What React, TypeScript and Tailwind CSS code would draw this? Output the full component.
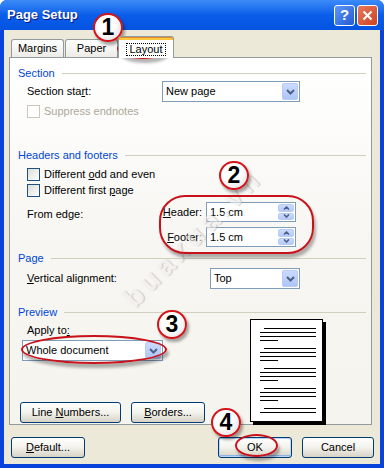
import React from 'react'

// XP-style Page Setup dialog (Layout tab) with tutorial markers

const Chevron = () => (
  <svg width="9" height="6" viewBox="0 0 9 6">
    <path d="M1 1l3.5 3.5L8 1" stroke="#4D6185" strokeWidth="2" fill="none" />
  </svg>
)

function Combo({ text, w }: { text: string; w: string }) {
  return (
    <div className={`flex h-[21px] items-center border border-[#7F9DB9] bg-white pl-[3px] pr-px ${w}`}>
      <span>{text}</span>
      <div className="ml-auto flex h-[17px] w-[16px] items-center justify-center rounded-[2px] border border-[#B8CBF5] bg-gradient-to-b from-[#CCDAFD] to-[#AFC5F8]">
        <Chevron />
      </div>
    </div>
  )
}

function Spin({ text }: { text: string }) {
  return (
    <div className="flex h-[20px] w-[90px] items-center border border-[#7F9DB9] bg-white pl-[3px] pr-px">
      <span>{text}</span>
      <div className="ml-auto flex h-[16px] w-[16px] flex-col gap-px">
        <div className="flex flex-1 items-center justify-center rounded-[2px] border border-[#B8CBF5] bg-gradient-to-b from-[#CCDAFD] to-[#B5C9F8]">
          <svg width="7" height="4" viewBox="0 0 7 4"><path d="M1 3.5l2.5-2.5L6 3.5" stroke="#4D6185" strokeWidth="1.6" fill="none" /></svg>
        </div>
        <div className="flex flex-1 items-center justify-center rounded-[2px] border border-[#B8CBF5] bg-gradient-to-b from-[#CCDAFD] to-[#B5C9F8]">
          <svg width="7" height="4" viewBox="0 0 7 4"><path d="M1 0.5l2.5 2.5L6 0.5" stroke="#4D6185" strokeWidth="1.6" fill="none" /></svg>
        </div>
      </div>
    </div>
  )
}

function Check({ label, disabled }: { label: React.ReactNode; disabled?: boolean }) {
  return (
    <div className="flex items-center gap-[4px]">
      <div
        className={
          disabled
            ? 'h-[13px] w-[13px] border border-[#CAC8BB] bg-white'
            : 'h-[13px] w-[13px] border border-[#1C5180] bg-gradient-to-br from-[#DCDCD7] to-white'
        }
      />
      <span className={disabled ? 'text-[#ACA899]' : ''}>{label}</span>
    </div>
  )
}

function Group({ title }: { title: string }) {
  return (
    <div className="flex h-[12px] items-center">
      <span className="text-[#0046D5]">{title}</span>
      <div className="ml-[7px] h-px flex-1 bg-[#D0D0BF]" />
    </div>
  )
}

function Btn({ children, w, def }: { children: React.ReactNode; w: string; def?: boolean }) {
  return (
    <div
      className={`flex h-[21px] items-center justify-center rounded-[3px] border border-[#003C74] bg-gradient-to-b from-white via-[#F3F2EC] to-[#D8D2C6] ${w} ${
        def ? 'shadow-[inset_0_0_0_1px_#BCD4F6,inset_0_-1px_0_1px_#8DB2E3]' : ''
      }`}
    >
      <span>{children}</span>
    </div>
  )
}

function Marker({ n, cls }: { n: string; cls: string }) {
  return (
    <div
      className={`absolute flex h-[29px] w-[30px] items-center justify-center rounded-full border-2 border-[#D4141B] bg-[radial-gradient(circle_at_40%_35%,#ffffff_40%,#dcdcdc_100%)] text-[23px] font-bold leading-none text-black shadow-[2px_3px_3px_rgba(0,0,0,0.35)] ${cls}`}
    >
      {n}
    </div>
  )
}

function Ring({ cls }: { cls: string }) {
  return (
    <div
      className={`pointer-events-none absolute border-2 border-[#C8121A] shadow-[2px_4px_3px_rgba(0,0,0,0.3)] ${cls}`}
    />
  )
}

function Preview() {
  const groups = [9, 29, 49, 69]
  return (
    <svg width="76" height="106" viewBox="0 0 76 106">
      <rect x="3" y="3" width="73" height="103" fill="#000" />
      <rect x="0.5" y="0.5" width="72" height="102" fill="#fff" stroke="#000" />
      {groups.map(y => (
        <g key={y} fill="#000">
          <rect x="14" y={y} width="52" height="1" />
          <rect x="10" y={y + 4} width="56" height="1" />
          <rect x="10" y={y + 8} width="56" height="1" />
          <rect x="10" y={y + 12} width="18" height="1" />
        </g>
      ))}
      <rect x="14" y="89" width="52" height="1" />
      <rect x="10" y="93" width="56" height="1" />
    </svg>
  )
}

export default function App() {
  return (
    <div className="relative h-[468px] w-[384px] overflow-hidden bg-white font-['Liberation_Sans',sans-serif] text-[11px] text-black">
      <div className="flex h-full w-full flex-col rounded-t-[7px] bg-[#0842DA]">
        {/* title bar */}
        <div className="flex h-[30px] items-center rounded-t-[7px] bg-gradient-to-b from-[#3C8BF7] via-[#0A5DE9] to-[#0553E2] pl-[7px] pr-[6px]">
          <span className="text-[13px] font-bold text-white [text-shadow:1px_1px_0_#0A1883]">Page Setup</span>
          <div className="ml-auto flex gap-[2px]">
            <div className="flex h-[21px] w-[21px] items-center justify-center rounded-[3px] border border-white bg-gradient-to-br from-[#5E97F6] to-[#2459D6] text-[15px] font-bold text-white">
              ?
            </div>
            <div className="flex h-[21px] w-[21px] items-center justify-center rounded-[3px] border border-white bg-gradient-to-br from-[#E9795B] to-[#CC4120]">
              <svg width="11" height="11" viewBox="0 0 11 11">
                <path d="M1.5 1.5l8 8M9.5 1.5l-8 8" stroke="#fff" strokeWidth="2" />
              </svg>
            </div>
          </div>
        </div>

        {/* body */}
        <div className="mx-[4px] flex flex-1 flex-col bg-[#ECE9D8]">
          {/* tabs */}
          <div className="mt-[6px] flex h-[21px] items-end pl-[7px]">
            <div className="flex h-[18px] w-[53px] items-center justify-center rounded-t-[3px] border border-b-0 border-[#919B9C] bg-gradient-to-b from-white to-[#ECEBE6]">
              Margins
            </div>
            <div className="ml-px flex h-[18px] w-[53px] items-center justify-center rounded-t-[3px] border border-b-0 border-[#919B9C] bg-gradient-to-b from-white to-[#ECEBE6]">
              Paper
            </div>
            <div className="relative z-10 -mb-px flex h-[22px] w-[56px] flex-col rounded-t-[3px] border border-b-0 border-[#919B9C] bg-white">
              <div className="h-[3px] rounded-t-[2px] bg-[#FFC83C] shadow-[inset_0_1px_0_#E68B2C]" />
              <div className="flex flex-1 items-center justify-center">
                <span className="border border-dotted border-black px-[2px] leading-[11px]">Layout</span>
              </div>
            </div>
          </div>

          {/* panel */}
          <div className="ml-[5px] mr-[8px] flex h-[368px] flex-col border border-[#919B9C] bg-gradient-to-b from-white via-[#F7F6F2] to-[#F5F4EE] pl-[8px] pr-[5px]">
            <div className="mt-[9px]">
              <Group title="Section" />
            </div>
            <div className="mt-[2px] flex h-[21px] items-center pl-[9px]">
              <span className="w-[135px]">
                Section sta<u>r</u>t:
              </span>
              <Combo text="New page" w="w-[138px]" />
            </div>
            <div className="mt-[2px] flex h-[15px] items-center pl-[9px]">
              <Check label="Suppress endnotes" disabled />
            </div>

            <div className="mt-[30px]">
              <Group title="Headers and footers" />
            </div>
            <div className="mt-[5px] flex h-[16px] items-center pl-[9px]">
              <Check label={<>Different <u>o</u>dd and even</>} />
            </div>
            <div className="flex h-[16px] items-center pl-[9px]">
              <Check label={<>Different first <u>p</u>age</>} />
            </div>
            <div className="mt-[4px] flex pl-[9px]">
              <span className="mt-[4px] w-[133px]">From edge:</span>
              <div className="flex w-[46px] flex-col items-end gap-[5px] pr-[4px]">
                <span className="flex h-[20px] items-center">
                  <span>
                    <u>H</u>eader:
                  </span>
                </span>
                <span className="flex h-[20px] items-center">
                  <span>
                    <u>F</u>ooter:
                  </span>
                </span>
              </div>
              <div className="flex flex-col gap-[5px]">
                <Spin text="1.5 cm" />
                <Spin text="1.5 cm" />
              </div>
            </div>

            <div className="mt-[5px]">
              <Group title="Page" />
            </div>
            <div className="mt-[4px] flex h-[21px] items-center pl-[9px]">
              <span className="w-[183px]">
                <u>V</u>ertical alignment:
              </span>
              <Combo text="Top" w="w-[90px]" />
            </div>

            <div className="mt-[17px]">
              <Group title="Preview" />
            </div>
            <div className="flex flex-1">
              <div className="flex flex-col">
                <span className="mt-[6px] flex h-[12px] items-center pl-[9px]">
                  <span>
                    Apply to<u>:</u>
                  </span>
                </span>
                <div className="mt-[4px] pl-[4px]">
                  <Combo text="Whole document" w="w-[141px]" />
                </div>
                <div className="mb-[2px] mt-auto flex gap-[10px] pl-[2px]">
                  <Btn w="w-[101px]">
                    Line <u>N</u>umbers...
                  </Btn>
                  <Btn w="w-[74px]">
                    <u>B</u>orders...
                  </Btn>
                </div>
              </div>
              <div className="ml-[45px] mt-px">
                <Preview />
              </div>
            </div>
          </div>

          {/* bottom buttons */}
          <div className="mt-[12px] flex pl-[7px] pr-[6px]">
            <Btn w="w-[74px]">
              <u>D</u>efault...
            </Btn>
            <div className="ml-auto flex gap-[10px]">
              <Btn w="w-[74px]" def>
                OK
              </Btn>
              <Btn w="w-[72px]">Cancel</Btn>
            </div>
          </div>
        </div>
        <div className="h-[4px]" />
      </div>

      {/* watermark */}
      <div className="pointer-events-none absolute left-[93px] top-[217px] w-[200px] -rotate-45 text-center text-[28px] font-bold tracking-[5px] text-[#EFEFEF] opacity-60 [text-shadow:1px_1px_1px_#B0B0B0]">
        buaxua.vn
      </div>

      {/* tutorial markers */}
      <Ring cls="left-[117px] top-[38px] h-[21px] w-[52px] rounded-[50%]" />
      <Marker n="1" cls="left-[93px] top-[13px]" />

      <Ring cls="left-[159px] top-[195px] h-[59px] w-[155px] rounded-[26px]" />
      <Marker n="2" cls="left-[219px] top-[161px]" />

      <Ring cls="left-[21px] top-[335px] h-[29px] w-[146px] rounded-[50%]" />
      <Marker n="3" cls="left-[157px] top-[310px]" />

      <Ring cls="left-[235px] top-[434px] h-[23px] w-[43px] rounded-[50%]" />
      <Marker n="4" cls="left-[211px] top-[408px]" />
    </div>
  )
}
